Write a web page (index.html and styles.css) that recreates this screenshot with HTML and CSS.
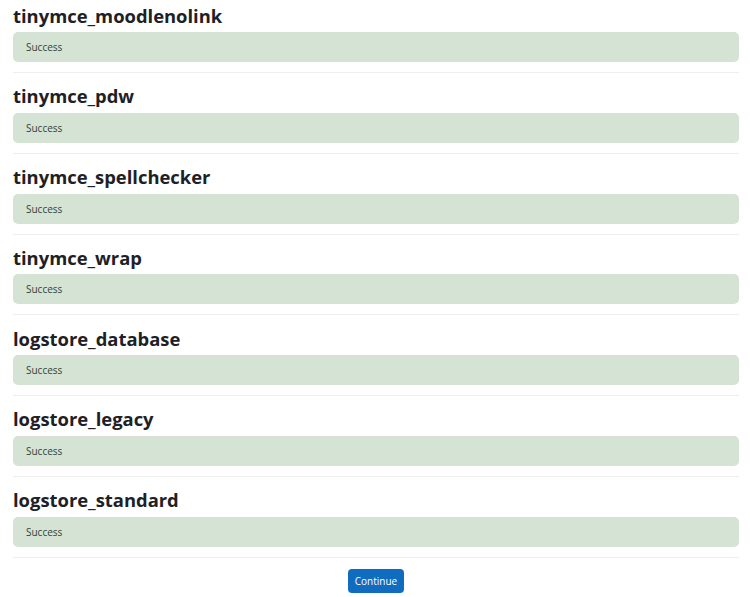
FILE: index.html
```html
<!DOCTYPE html>
<html lang="en">
<head>
  <meta charset="UTF-8">
  <title>Upgrade plugins</title>
  <link rel="stylesheet" href="styles.css">
</head>
<body>
  <div class="page">
    <div class="plugin">
      <h3 class="plugin-name">tinymce_moodlenolink</h3>
      <div class="alert-success">Success</div>
    </div>
    <div class="plugin">
      <h3 class="plugin-name">tinymce_pdw</h3>
      <div class="alert-success">Success</div>
    </div>
    <div class="plugin">
      <h3 class="plugin-name">tinymce_spellchecker</h3>
      <div class="alert-success">Success</div>
    </div>
    <div class="plugin">
      <h3 class="plugin-name">tinymce_wrap</h3>
      <div class="alert-success">Success</div>
    </div>
    <div class="plugin">
      <h3 class="plugin-name">logstore_database</h3>
      <div class="alert-success">Success</div>
    </div>
    <div class="plugin">
      <h3 class="plugin-name">logstore_legacy</h3>
      <div class="alert-success">Success</div>
    </div>
    <div class="plugin">
      <h3 class="plugin-name">logstore_standard</h3>
      <div class="alert-success">Success</div>
    </div>
    <div class="continue">
      <button class="btn-primary">Continue</button>
    </div>
  </div>
</body>
</html>
```

FILE: styles.css
```css
body {
  margin: 0;
  font-family: 'Open Sans', sans-serif;
  background-color: #fff;
  color: #1d2125;
}

.page {
  padding: 3.5px 11px 0 13px;
}

.plugin {
  border-bottom: 1px solid #eceeef;
  padding-bottom: 10px;
  margin-bottom: 11.25px;
}

.plugin-name {
  font-size: 18.4px;
  font-weight: bold;
  line-height: 24px;
  margin: 0 0 4.5px 0;
}

.alert-success {
  height: 30px;
  box-sizing: border-box;
  padding: 0 13px;
  line-height: 30px;
  font-size: 10px;
  color: #334233;
  background-color: #d5e3d5;
  border-radius: 5px;
}

.continue {
  display: flex;
  justify-content: center;
}

.btn-primary {
  width: 56px;
  height: 24px;
  padding: 0;
  border: none;
  border-radius: 4px;
  background-color: #0f6cbf;
  color: #fff;
  font-family: 'Open Sans', sans-serif;
  font-size: 10px;
  cursor: pointer;
}
```
